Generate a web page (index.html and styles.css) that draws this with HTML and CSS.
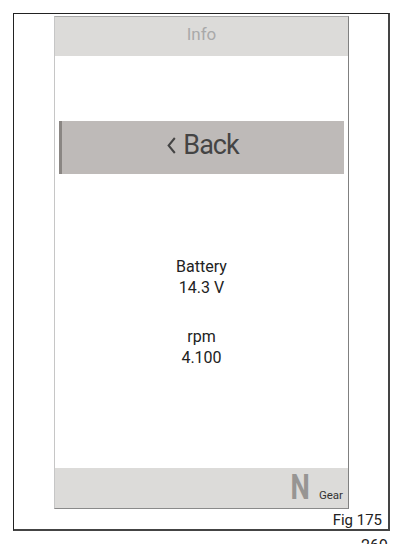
FILE: index.html
```html
<!DOCTYPE html>
<html lang="en">
<head>
<meta charset="utf-8">
<title>Info</title>
<link rel="stylesheet" href="styles.css">
</head>
<body>
<div class="page">
  <div class="frame">
    <div class="screen">
      <div class="header">Info</div>
      <div class="main">
        <div class="back-btn">
          <svg class="chev" width="9" height="17" viewBox="0 0 9 17"><polyline points="7.8,1 1.6,8.5 7.8,16" fill="none" stroke="#444" stroke-width="2"/></svg>
          <span class="back-label">Back</span>
        </div>
        <div class="data">
          <div class="item">
            <div>Battery</div>
            <div>14.3 V</div>
          </div>
          <div class="item">
            <div>rpm</div>
            <div>4.100</div>
          </div>
        </div>
      </div>
      <div class="footer">
        <span class="gear-n">N</span>
        <span class="gear-label">Gear</span>
      </div>
    </div>
    <div class="fig">Fig 175</div>
  </div>
  <div class="pagenum">269</div>
</div>
</body>
</html>
```
FILE: styles.css
```css
html, body {
  margin: 0;
  padding: 0;
  background: #fff;
  font-family: Roboto, "Liberation Sans", sans-serif;
  overflow: hidden;
}

.page {
  padding: 13px 0 0 13px;
  width: 377px;
}

.frame {
  width: 334px;
  border-top: 1px solid #222;
  border-left: 1px solid #222;
  border-right: 2px solid #444;
  border-bottom: 2px solid #444;
  padding: 2px 0 0 40px;
}

.screen {
  width: 293px;
  height: 491px;
  border-top: 1px solid #a8a8a8;
  border-left: 1px solid #c6c6c6;
  border-right: 1px solid #808080;
  border-bottom: 1px solid #8a8a8a;
  display: flex;
  flex-direction: column;
}

.header {
  height: 39px;
  background: #dcdbd9;
  color: #a9a9a9;
  font-size: 17px;
  line-height: 35px;
  text-align: center;
}

.main {
  flex: 1;
  display: flex;
  flex-direction: column;
}

.back-btn {
  margin: 65px 4px 0 4px;
  height: 48px;
  padding-bottom: 5px;
  background: #bebab8;
  border-left: 3px solid #8a8683;
  display: flex;
  align-items: center;
  justify-content: center;
  gap: 7px;
  color: #444;
}

.chev {
  display: block;
  margin-top: 1px;
}

.back-label {
  font-size: 27px;
  line-height: 48px;
  letter-spacing: -1px;
}

.data {
  margin-top: 82px;
  display: flex;
  flex-direction: column;
  gap: 28px;
  color: #222;
  font-size: 16px;
  line-height: 21px;
  text-align: center;
}

.footer {
  height: 38px;
  padding: 2px 5px 0 0;
  background: #dcdbd9;
  display: flex;
  justify-content: flex-end;
  align-items: baseline;
  gap: 9px;
}

.gear-n {
  display: inline-block;
  font-size: 35px;
  line-height: 35px;
  font-weight: 700;
  color: #979593;
  transform: scaleX(0.78);
  transform-origin: right center;
}

.gear-label {
  font-size: 11.5px;
  color: #333;
}

.fig {
  margin-top: 3px;
  padding-right: 6px;
  text-align: right;
  font-size: 15px;
  line-height: 17px;
  color: #222;
}

.pagenum {
  margin-top: 6px;
  padding-right: 2px;
  text-align: right;
  font-size: 16px;
  line-height: 18px;
  color: #222;
}
```
